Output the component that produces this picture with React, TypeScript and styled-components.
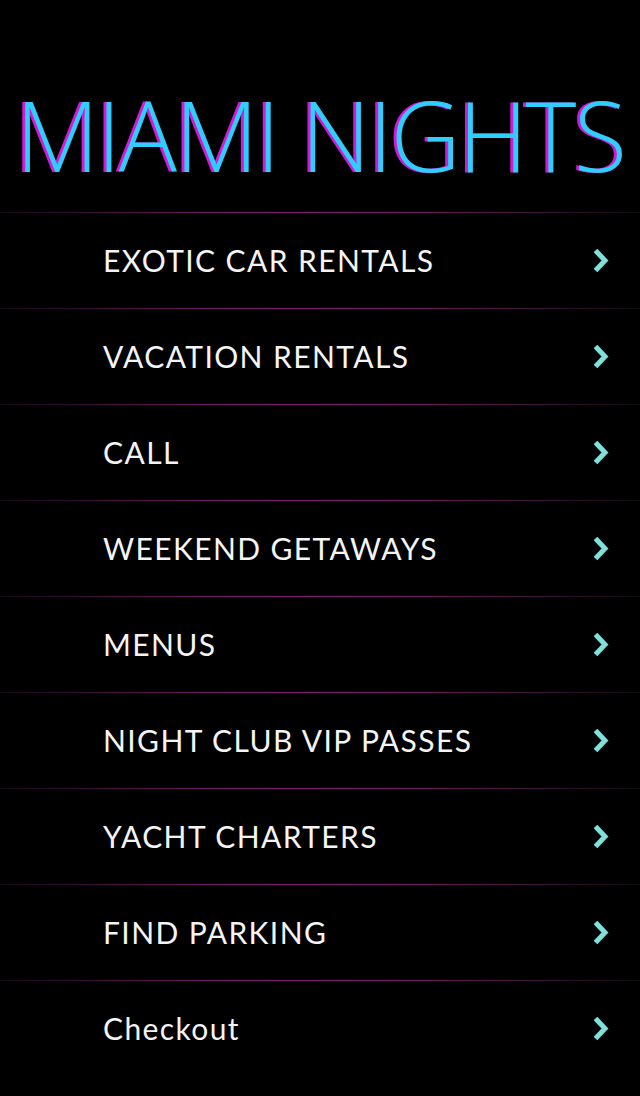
import styled, { createGlobalStyle } from 'styled-components';

const ITEMS = [
  'EXOTIC CAR RENTALS',
  'VACATION RENTALS',
  'CALL',
  'WEEKEND GETAWAYS',
  'MENUS',
  'NIGHT CLUB VIP PASSES',
  'YACHT CHARTERS',
  'FIND PARKING',
  'Checkout',
];

const GlobalStyle = createGlobalStyle`
  html, body {
    margin: 0;
    padding: 0;
    background: #000;
  }
`;

const Chevron = () => (
  <svg width='17' height='27' viewBox='0 0 17 27' aria-hidden='true'>
    <polyline
      points='3.5,3.5 13,13.5 3.5,23.5'
      fill='none'
      stroke='#7fe0dc'
      strokeWidth='5'
      strokeLinejoin='miter'
    />
  </svg>
);

export default function App() {
  return (
    <Page>
      <GlobalStyle />
      <Header>
        <Title>MIAMI NIGHTS</Title>
      </Header>
      <Menu>
        {ITEMS.map((label) => (
          <Row key={label}>
            <Label>{label}</Label>
            <Chevron />
          </Row>
        ))}
      </Menu>
    </Page>
  );
}

const Page = styled.div`
  width: 640px;
  min-height: 1096px;
  background: #000;
  display: flex;
  flex-direction: column;
`;

const Header = styled.header`
  height: 212px;
  display: flex;
  align-items: flex-end;
  justify-content: center;
  box-sizing: border-box;
  padding-bottom: 29px;
`;

const Title = styled.h1`
  margin: 0;
  font-family: 'Open Sans', sans-serif;
  font-weight: 300;
  font-size: 97px;
  letter-spacing: -2.4px;
  line-height: 1;
  color: #2ecfff;
  text-shadow: -3px 0 #d41ad8;
  white-space: nowrap;
`;

const Menu = styled.nav`
  display: flex;
  flex-direction: column;
`;

const Row = styled.div`
  position: relative;
  height: 96px;
  display: flex;
  align-items: center;
  justify-content: space-between;
  padding: 0 31px 0 103px;
  box-sizing: border-box;

  &::before {
    content: '';
    position: absolute;
    left: 0;
    right: 0;
    top: 0;
    height: 1px;
    background: linear-gradient(
      90deg,
      rgba(40, 20, 40, 0.5) 0%,
      #5a1652 25%,
      #8a1c78 45%,
      #7a1a6c 60%,
      #3a1534 85%,
      rgba(30, 20, 30, 0.5) 100%
    );
  }
`;

const Label = styled.span`
  font-family: 'Lato', sans-serif;
  font-weight: 400;
  font-size: 30px;
  letter-spacing: 1.4px;
  color: #f4f4f4;
  white-space: nowrap;
`;
